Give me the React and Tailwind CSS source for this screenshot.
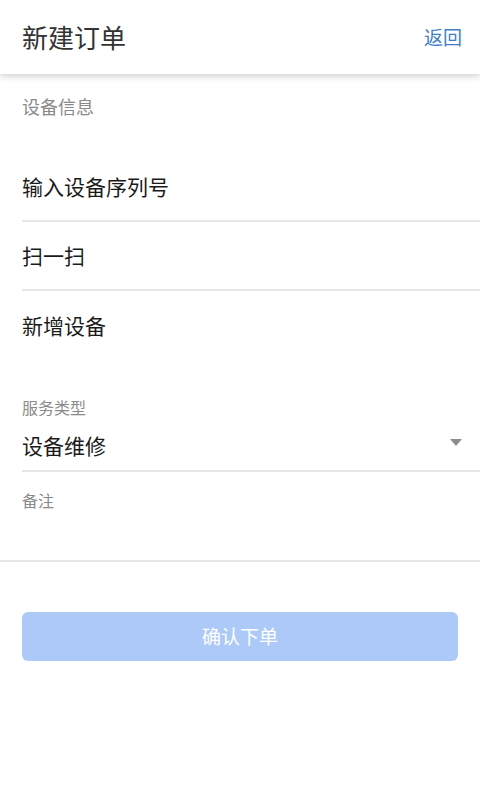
import React from 'react';

const font = { fontFamily: '"Noto Sans CJK SC", "Noto Sans", sans-serif' };

export default function App() {
  return (
    <div className="w-[480px] min-h-[800px] bg-white" style={font}>
      <header className="relative z-10 h-[74px] pl-[22px] pr-[18px] flex items-center justify-between bg-white shadow-[0_3px_6px_rgba(0,0,0,0.16)]">
        <h1 className="text-[26px] leading-[34px] text-[#333]">新建订单</h1>
        <button className="text-[19px] leading-[26px] text-[#3f7fc6]">返回</button>
      </header>

      <div className="h-[79px] px-[22px] pt-[19px]">
        <p className="text-[18px] leading-[26px] text-[#8a8a8a]">设备信息</p>
      </div>

      <div className="ml-[22px]">
        <div className="h-[69px] flex items-center border-b-2 border-[#e6e6e6] text-[21px] text-[#1a1a1a]">输入设备序列号</div>
        <div className="h-[69px] flex items-center border-b-2 border-[#e6e6e6] text-[21px] text-[#1a1a1a]">扫一扫</div>
        <div className="h-[69px] flex items-center text-[21px] text-[#1a1a1a]">新增设备</div>
      </div>

      <div className="ml-[22px] mt-[36px] border-b-2 border-[#e6e6e6] pb-[11px]">
        <p className="text-[16px] leading-[22px] text-[#8a8a8a]">服务类型</p>
        <div className="mt-[13px] flex items-center justify-between pr-[18px]">
          <span className="text-[21px] leading-[28px] text-[#1a1a1a]">设备维修</span>
          <svg width="12" height="7" viewBox="0 0 12 7" className="-mt-[6px]">
            <path d="M0 0 L12 0 L6 7 Z" fill="#8c8c8c" />
          </svg>
        </div>
      </div>

      <div className="h-[90px] border-b-2 border-[#e6e6e6] pt-[17px] px-[22px]">
        <p className="text-[16px] leading-[22px] text-[#8a8a8a]">备注</p>
      </div>

      <div className="px-[22px] mt-[50px]">
        <button className="w-full h-[49px] rounded-[6px] bg-[#adc9f8] text-white text-[19px]">确认下单</button>
      </div>
    </div>
  );
}
